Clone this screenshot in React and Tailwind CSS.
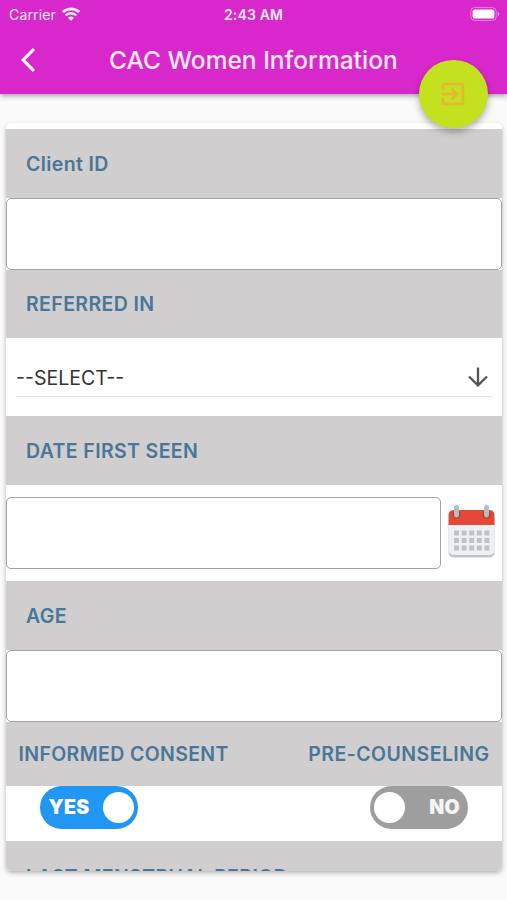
import { useState } from "react";
import { MdExitToApp } from "react-icons/md";

function StatusBar() {
  return (
    <div className="grid h-7 grid-cols-3 items-center pl-[9px] pr-[7px] text-[14px] text-white/90">
      <div className="flex items-center gap-[6px]">
        <span className="tracking-[0.15px]">Carrier</span>
        <svg className="-mt-px h-[14px] w-[18px]" viewBox="0 0 18 14" fill="none" stroke="currentColor">
          <path d="M0.9 5.1A11.6 11.6 0 0 1 17.1 5.1" strokeWidth="2.8" />
          <path d="M3.7 8.4A7.5 7.5 0 0 1 14.3 8.4" strokeWidth="2.5" />
          <path d="M9 13.8L6 10.9A4.3 4.3 0 0 1 12 10.9Z" fill="currentColor" stroke="none" />
        </svg>
      </div>
      <span className="-ml-[2px] text-center font-semibold tracking-[0.15px] whitespace-nowrap">2:43 AM</span>
      <svg className="-mt-px h-[14px] w-[30px] justify-self-end" viewBox="0 0 30 14">
        <rect x="0.8" y="0.6" width="25.4" height="12.8" rx="3.8" fill="none" stroke="white" strokeOpacity="0.4" />
        <rect x="2.6" y="2.4" width="21.8" height="9.2" rx="2.2" fill="white" />
        <path d="M27.6 4.8Q29.4 5.6 29.4 7T27.6 9.2Z" fill="white" fillOpacity="0.45" />
      </svg>
    </div>
  );
}

function Header() {
  return (
    <header className="relative z-10 h-[94px] bg-[#d828cb] shadow-[0_2px_5px_rgba(0,0,0,0.35)]">
      <StatusBar />
      <div className="flex h-[64px] items-center pl-[20.5px]">
        <button type="button" aria-label="Back">
          <svg className="h-6 w-[14px]" viewBox="0 0 11.67 19.8" fill="white">
            <path d="M11.67 1.77L9.9 0 0 9.9l9.9 9.9 1.77-1.77L3.54 9.9z" />
          </svg>
        </button>
        <h1 className="ml-[74.5px] text-[24.5px] font-medium tracking-[0.02px] whitespace-nowrap text-white/90">
          CAC Women Information
        </h1>
      </div>
      <button
        type="button"
        aria-label="Exit"
        className="absolute top-[59.5px] right-[19.5px] flex size-[68.5px] items-center justify-center rounded-full bg-[#c3e11f] shadow-[0_4px_7px_rgba(0,0,0,0.3)]"
      >
        <MdExitToApp className="size-[30px] text-[#eab534]" />
      </button>
    </header>
  );
}

function Label({ children, className = "pt-[2px]" }) {
  return (
    <div
      className={`flex h-[68.5px] items-center bg-[#d0cece] pl-5 text-[19.5px] font-semibold tracking-[0.38px] text-[#4a7699] ${className}`}
    >
      {children}
    </div>
  );
}

function Field({ label }) {
  return (
    <input
      aria-label={label}
      className="block h-[72px] w-full rounded-[5px] border border-[#a3a3a3] bg-white px-3 outline-none"
    />
  );
}

function Toggle({ on, onClick, label }) {
  return (
    <button
      type="button"
      aria-label={label}
      onClick={onClick}
      className={`flex h-[43px] w-[98px] items-center justify-between rounded-full text-[19.5px] font-black text-white ${
        on ? "bg-[#2196f3] pr-1 pl-[9px]" : "flex-row-reverse bg-[#9e9e9e] pr-[8px] pl-1"
      }`}
    >
      <span className={on ? "pt-[2px] tracking-[0.3px]" : "pt-[2px] tracking-[0.3px] text-white/90"}>
        {on ? "YES" : "NO"}
      </span>
      <span className="size-[31px] rounded-full bg-white" />
    </button>
  );
}

function CalendarIcon() {
  return (
    <svg className="-mt-[2px] h-[54px] w-[47px]" viewBox="0 0 47 54">
      <path d="M0.5 18h46v29a5 5 0 0 1-5 5.5h-36a5 5 0 0 1-5-5.5z" fill="#bcc5c9" />
      <path d="M0.5 18h46v27a5 5 0 0 1-5 5h-36a5 5 0 0 1-5-5z" fill="#eef1f3" />
      <path d="M0.5 20V10a5 5 0 0 1 5-5h36a5 5 0 0 1 5 5v10z" fill="#e54837" />
      <circle cx="8.5" cy="9.5" r="4" fill="#b63b31" />
      <circle cx="38.5" cy="9.5" r="4" fill="#b63b31" />
      <rect x="6" y="0" width="5" height="12.5" rx="2.5" fill="#b4bdc1" />
      <rect x="36" y="0" width="5" height="12.5" rx="2.5" fill="#b4bdc1" />
      {[25.5, 33, 40.5].map((y) =>
        [6, 13.6, 21.2, 28.8, 36.4].map((x) => (
          <rect key={`${x}-${y}`} x={x} y={y} width="5" height="5" fill="#bdc3c7" />
        ))
      )}
    </svg>
  );
}

export default function App() {
  const [consent, setConsent] = useState(true);
  const [counseling, setCounseling] = useState(false);

  return (
    <div className="h-[900px] w-[507px] overflow-hidden bg-[#fafafa] font-['Inter',sans-serif]">
      <Header />
      <main className="mt-[29px] mr-[5px] ml-[6px] h-[748px] rounded-[5px] shadow-[0_2px_4px_rgba(0,0,0,0.28)]">
        <div className="h-full overflow-hidden rounded-[5px] bg-white pt-[6px]">
          <Label>Client ID</Label>
          <Field label="Client ID" />
          <Label>REFERRED IN</Label>
          <div className="h-[78px] px-[10px] pt-5">
            <div className="flex h-[39px] items-center justify-between border-b border-[#e4e4e4] pr-[4.5px] text-[19.5px] text-[#333]">
              <span className="pt-[3px]">--SELECT--</span>
              <svg className="size-5" viewBox="0 0 20 20" fill="none" stroke="#555" strokeWidth="2.3">
                <path d="M10 0.5V18M1 9.5L10 18.3L19 9.5" />
              </svg>
            </div>
          </div>
          <Label>DATE FIRST SEEN</Label>
          <div className="flex h-[96.5px] items-center gap-[7px] pr-[7px]">
            <div className="flex-1">
              <Field label="Date first seen" />
            </div>
            <button type="button" aria-label="Pick a date">
              <CalendarIcon />
            </button>
          </div>
          <Label>AGE</Label>
          <Field label="Age" />
          <div className="flex h-[64px] items-center justify-between bg-[#d0cece] px-[12.5px] pt-[2px] text-[19.5px] font-semibold tracking-[0.36px] text-[#4a7699]">
            <span>INFORMED CONSENT</span>
            <span className="tracking-[0.44px]">PRE-COUNSELING</span>
          </div>
          <div className="flex h-[55.5px] items-start justify-between pr-[34px] pl-[33.5px]">
            <Toggle on={consent} label="Informed consent" onClick={() => setConsent(!consent)} />
            <Toggle on={counseling} label="Pre-counseling" onClick={() => setCounseling(!counseling)} />
          </div>
          <Label className="pt-[5px]">LAST MENSTRUAL PERIOD</Label>
        </div>
      </main>
    </div>
  );
}
